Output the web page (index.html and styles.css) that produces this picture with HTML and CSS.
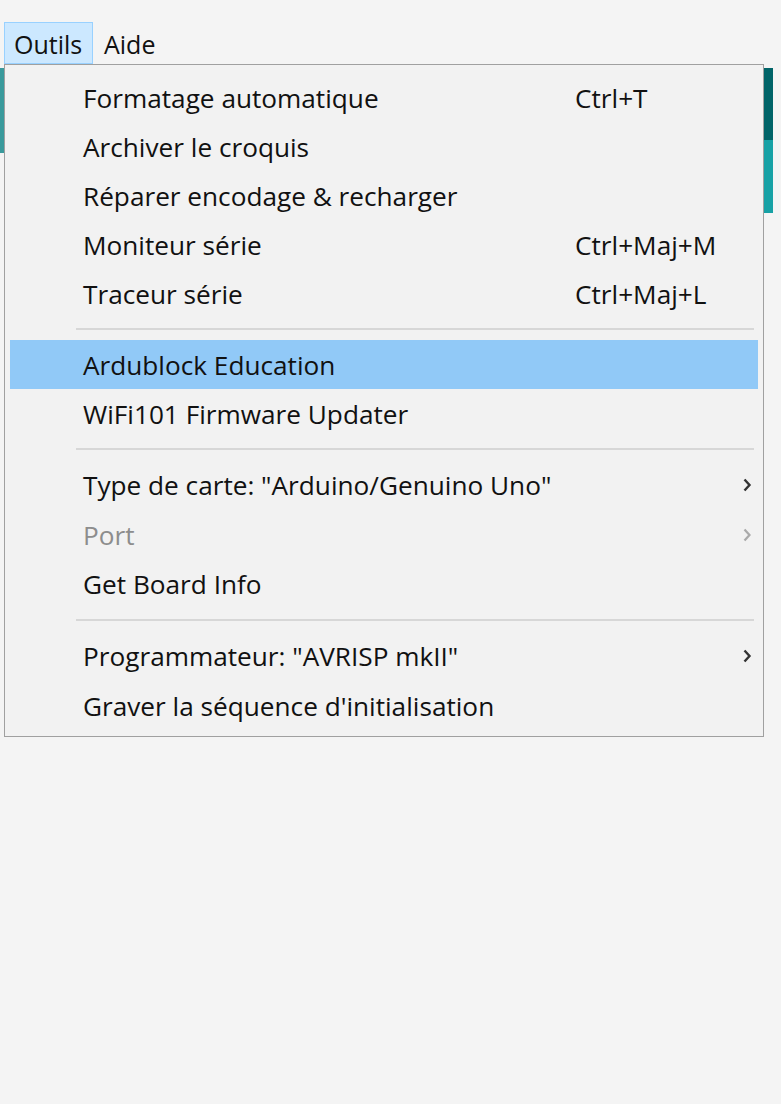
FILE: index.html
```html
<!DOCTYPE html>
<html lang="fr">
<head>
<meta charset="utf-8">
<title>Outils</title>
<link rel="stylesheet" href="styles.css">
</head>
<body>
<div class="menubar">
  <span class="mb-item active">Outils</span>
  <span class="mb-item">Aide</span>
</div>
<div class="workspace">
  <div class="editor-left"></div>
  <div class="editor-right">
    <div class="bar-dark"></div>
    <div class="bar-light"></div>
  </div>
  <div class="menu">
    <div class="item"><span class="label">Formatage automatique</span><span class="key">Ctrl+T</span></div>
    <div class="item"><span class="label">Archiver le croquis</span></div>
    <div class="item"><span class="label">Réparer encodage &amp; recharger</span></div>
    <div class="item"><span class="label">Moniteur série</span><span class="key">Ctrl+Maj+M</span></div>
    <div class="item"><span class="label">Traceur série</span><span class="key">Ctrl+Maj+L</span></div>
    <div class="sep"></div>
    <div class="item hl"><span class="label">Ardublock Education</span></div>
    <div class="item"><span class="label">WiFi101 Firmware Updater</span></div>
    <div class="sep"></div>
    <div class="item low"><span class="label">Type de carte: "Arduino/Genuino Uno"</span><svg class="arrow" viewBox="0 0 10 16"><path d="M2.5 2.5 L7.5 8 L2.5 13.5" fill="none" stroke="#333" stroke-width="2.4"/></svg></div>
    <div class="item low disabled"><span class="label">Port</span><svg class="arrow" viewBox="0 0 10 16"><path d="M2.5 2.5 L7.5 8 L2.5 13.5" fill="none" stroke="#aaa" stroke-width="2.2"/></svg></div>
    <div class="item low"><span class="label">Get Board Info</span></div>
    <div class="sep"></div>
    <div class="item low"><span class="label">Programmateur: "AVRISP mkII"</span><svg class="arrow" viewBox="0 0 10 16"><path d="M2.5 2.5 L7.5 8 L2.5 13.5" fill="none" stroke="#333" stroke-width="2.4"/></svg></div>
    <div class="item low"><span class="label">Graver la séquence d'initialisation</span></div>
  </div>
</div>
</body>
</html>
```
FILE: styles.css
```css
html, body {
  margin: 0;
  padding: 0;
  background: #f4f4f4;
}
body {
  width: 781px;
  height: 1104px;
  overflow: hidden;
  font-family: "Open Sans", "Noto Sans", "Liberation Sans", sans-serif;
  color: #111111;
}
.menubar {
  height: 64px;
  box-sizing: border-box;
  padding: 22px 0 0 4px;
  display: flex;
  align-items: stretch;
  gap: 1px;
}
.mb-item {
  height: 42px;
  box-sizing: border-box;
  padding: 0 9px;
  font-size: 25px;
  line-height: 42px;
  border: 1px solid transparent;
}
.mb-item.active {
  background: #cce8ff;
  border-color: #99d1ff;
  width: 89px;
}
.workspace {
  position: relative;
  height: 1040px;
}
.editor-left {
  position: absolute;
  left: 0;
  top: 4px;
  width: 4px;
  height: 85px;
  background: #3a9a9c;
}
.editor-right {
  position: absolute;
  left: 764px;
  top: 4px;
  width: 9px;
}
.bar-dark { height: 72px; background: #006468; }
.bar-light { height: 73px; background: #17a1a5; }
.menu {
  position: absolute;
  left: 4px;
  top: 0;
  width: 760px;
  box-sizing: border-box;
  background: #f2f2f2;
  border: 1px solid #a0a0a0;
  padding: 8px 5px 5px 5px;
}
.item {
  height: 49px;
  display: flex;
  align-items: center;
  position: relative;
  font-size: 26.2px;
}
.item.low {
  height: 49.8px;
}
.item .label {
  margin-left: 73px;
  flex: 1;
  white-space: nowrap;
}
.item .key {
  position: absolute;
  left: 565px;
  white-space: nowrap;
}
.item.hl {
  background: #91c9f7;
}
.item.disabled { color: #8d8d8d; }
.arrow {
  position: absolute;
  left: 732px;
  width: 10px;
  height: 16px;
}
.sep {
  height: 22px;
  display: flex;
  align-items: center;
  padding-left: 66px;
  padding-right: 4px;
}
.sep::before {
  content: "";
  display: block;
  flex: 1;
  height: 2px;
  background: #d7d7d7;
}
```
